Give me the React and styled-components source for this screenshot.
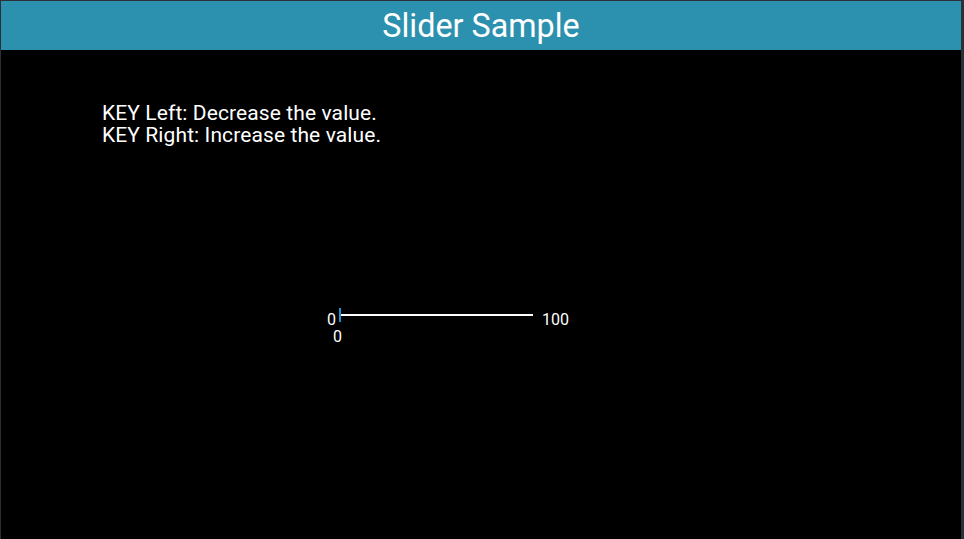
import React from "react";
import styled, { createGlobalStyle } from "styled-components";

const Global = createGlobalStyle`
  html, body { margin: 0; padding: 0; background: #000; }
  body { font-family: Roboto, "Open Sans", sans-serif; }
`;

const Frame = styled.div`
  box-sizing: border-box;
  width: 964px;
  height: 539px;
  background: #000;
  border-top: 1px solid #2b2f36;
  border-left: 1px solid #2b2f36;
  border-right: 3px solid #2b2f36;
  display: flex;
  flex-direction: column;
  overflow: hidden;
`;

const Header = styled.header`
  height: 49px;
  background: #2c91ae;
  color: #fff;
  display: flex;
  align-items: center;
  justify-content: center;
  font-size: 32.3px;
  font-weight: 400;
  flex: none;
`;

const Content = styled.main`
  flex: 1;
  display: flex;
  flex-direction: column;
  padding: 52px 0 0 101px;
`;

const Hint = styled.div`
  color: #fff;
  font-size: 21px;
  line-height: 22px;
  letter-spacing: 0.1px;
`;

const SliderRow = styled.div`
  margin-top: 166px;
  margin-left: 225px;
  display: flex;
  align-items: flex-start;
  color: #fff;
  font-size: 16px;
  line-height: 16px;
`;

const MinLabel = styled.span`
  width: 12px;
`;

const TrackArea = styled.div`
  position: relative;
  width: 194px;
  height: 30px;
  margin-right: 9px;
`;

const Track = styled.div`
  position: absolute;
  left: 2px;
  right: 0;
  top: 2px;
  height: 2px;
  background: #fff;
`;

const Thumb = styled.div`
  position: absolute;
  left: 0;
  top: -4px;
  width: 2px;
  height: 14px;
  background: #1e90d6;
`;

const ValueLabel = styled.span`
  position: absolute;
  left: -6px;
  top: 17px;
`;

export default function App() {
  return (
    <>
      <Global />
      <Frame>
        <Header>Slider Sample</Header>
        <Content>
          <Hint>KEY Left: Decrease the value.</Hint>
          <Hint>KEY Right: Increase the value.</Hint>
          <SliderRow>
            <MinLabel>0</MinLabel>
            <TrackArea>
              <Track />
              <Thumb />
              <ValueLabel>0</ValueLabel>
            </TrackArea>
            <span>100</span>
          </SliderRow>
        </Content>
      </Frame>
    </>
  );
}
